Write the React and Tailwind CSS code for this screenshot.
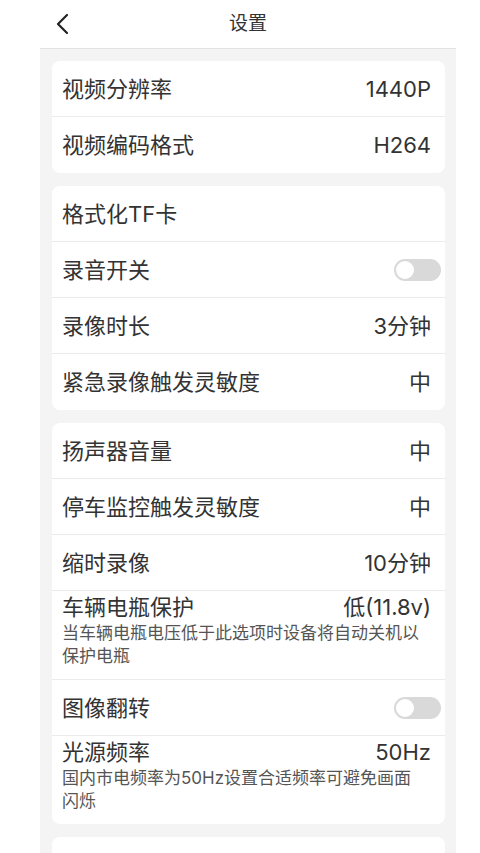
import React from 'react';

const font = { fontFamily: 'Inter, "Noto Sans CJK SC", "Noto Sans", sans-serif' };

function Toggle() {
  return (
    <div className="w-[47px] h-[22px] rounded-full bg-[#d9d9d9] flex items-center px-[2px]">
      <div className="w-[18px] h-[18px] rounded-full bg-white" />
    </div>
  );
}

function Row({ label, value, toggle, desc, last }) {
  return (
    <div className={`pl-[10px] pr-[14px] ${last ? '' : 'border-b border-[#ececec]'} ${desc ? 'pt-0 pb-[11px]' : 'h-[56px] flex items-center'}`}>
      <div className={`flex items-center justify-between w-full ${desc ? 'h-[31px]' : ''}`}>
        <span className="text-[22px] text-[#333] leading-none">{label}</span>
        {toggle ? <div className="-mr-[10px]"><Toggle /></div> : <span className="text-[22px] text-[#333] leading-none">{value}</span>}
      </div>
      {desc && <p className="text-[17px] leading-[23px] text-[#555]">{desc}</p>}
    </div>
  );
}

function Card({ children }) {
  return <div className="bg-white rounded-[8px] overflow-hidden">{children}</div>;
}

export default function App() {
  return (
    <div className="w-[480px] h-[853px] bg-white overflow-hidden" style={font}>
      <div className="ml-[40px] w-[416px] min-h-[853px] bg-[#f4f4f4]">
        <header className="h-[49px] bg-white border-b border-[#e3e3e3] flex items-center relative">
          <svg className="absolute left-[15px] top-[13px]" width="16" height="22" viewBox="0 0 16 22" fill="none" stroke="#222" strokeWidth="2.2" strokeLinecap="round" strokeLinejoin="round">
            <path d="M12 2 L3 11 L12 20" />
          </svg>
          <h1 className="w-full text-center text-[19px] text-[#333] leading-none -mt-[2px]">设置</h1>
        </header>
        <div className="pl-[12px] pr-[11px] pt-[12px] flex flex-col gap-[13px]">
          <Card>
            <Row label="视频分辨率" value="1440P" />
            <Row label="视频编码格式" value="H264" last />
          </Card>
          <Card>
            <Row label="格式化TF卡" />
            <Row label="录音开关" toggle />
            <Row label="录像时长" value="3分钟" />
            <Row label="紧急录像触发灵敏度" value="中" last />
          </Card>
          <Card>
            <Row label="扬声器音量" value="中" />
            <Row label="停车监控触发灵敏度" value="中" />
            <Row label="缩时录像" value="10分钟" />
            <Row label="车辆电瓶保护" value="低(11.8v)" desc={<>当车辆电瓶电压低于此选项时设备将自动关机以<br />保护电瓶</>} />
            <Row label="图像翻转" toggle />
            <Row label="光源频率" value="50Hz" desc={<>国内市电频率为50Hz设置合适频率可避免画面<br />闪烁</>} last />
          </Card>
          <div className="bg-white rounded-[8px] h-[56px]" />
        </div>
      </div>
    </div>
  );
}
